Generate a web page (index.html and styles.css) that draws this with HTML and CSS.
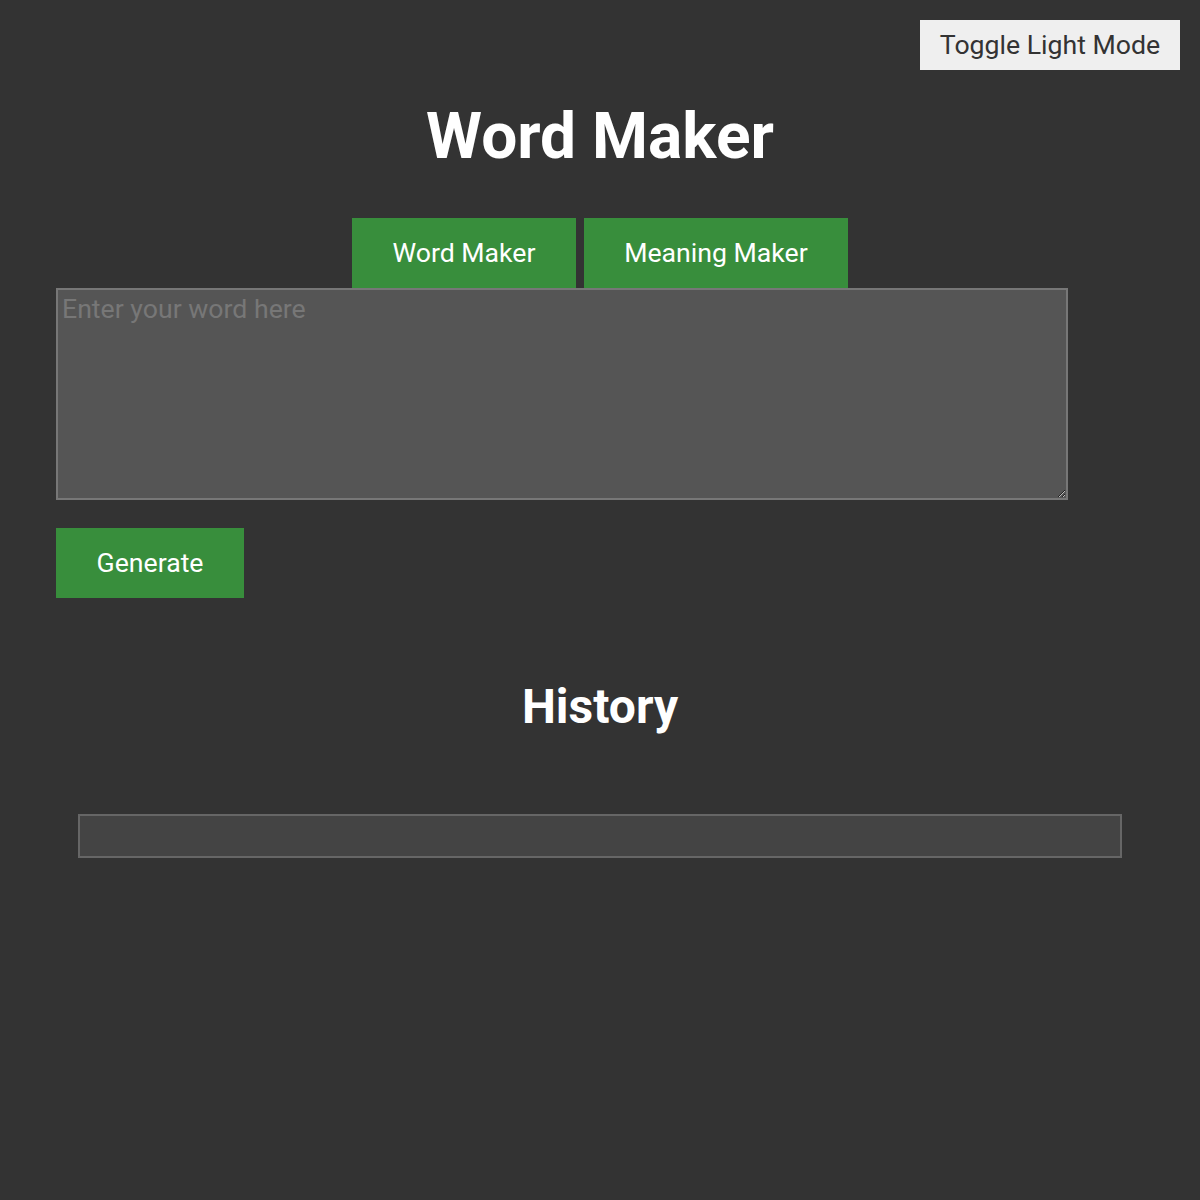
FILE: index.html
```html
<!DOCTYPE html>
<html lang="en">
<head>
<meta charset="utf-8">
<title>Word Maker</title>
<link rel="stylesheet" href="styles.css">
</head>
<body>
<button class="toggle">Toggle Light Mode</button>
<main class="page">
  <h1 class="title">Word Maker</h1>
  <div class="tabs">
    <button class="tab tab-word">Word Maker</button>
    <button class="tab tab-meaning">Meaning Maker</button>
  </div>
  <div class="form">
    <textarea class="input" placeholder="Enter your word here"></textarea>
    <button class="generate">Generate</button>
  </div>
  <h2 class="history-title">History</h2>
  <div class="history"></div>
</main>
</body>
</html>
```

FILE: styles.css
```css
html, body {
  margin: 0;
  padding: 0;
  background: #333333;
  font-family: Roboto, "Liberation Sans", sans-serif;
  color: #ffffff;
}

.toggle {
  position: absolute;
  top: 20px;
  right: 20px;
  width: 260px;
  height: 50px;
  border: none;
  background: #efefef;
  color: #333333;
  font-family: Roboto, "Liberation Sans", sans-serif;
  font-size: 26.67px;
  padding: 0;
  cursor: pointer;
}

.page {
  display: flex;
  flex-direction: column;
  padding-top: 99px;
}

.title {
  margin: 0;
  text-align: center;
  font-size: 64px;
  font-weight: 700;
  line-height: 75px;
}

.tabs {
  display: flex;
  justify-content: center;
  gap: 8px;
  margin-top: 44px;
}

.tab {
  height: 70px;
  border: none;
  background: #388e3c;
  color: #ffffff;
  font-family: Roboto, "Liberation Sans", sans-serif;
  font-size: 26.67px;
  padding: 0;
}

.tab-word { width: 224px; }
.tab-meaning { width: 264px; }

.form {
  display: flex;
  flex-direction: column;
  align-items: flex-start;
  padding-left: 56px;
}

.input {
  box-sizing: border-box;
  width: 1012px;
  height: 212px;
  margin: 0;
  border: 2px solid #777777;
  background: #555555;
  color: #ffffff;
  font-family: Roboto, "Liberation Sans", sans-serif;
  font-size: 26.67px;
  padding: 3px 4px;
  display: block;
  color-scheme: dark;
}

.input::placeholder {
  color: #777777;
}

.generate {
  margin-top: 28px;
  width: 188px;
  height: 70px;
  border: none;
  background: #388e3c;
  color: #ffffff;
  font-family: Roboto, "Liberation Sans", sans-serif;
  font-size: 26.67px;
  padding: 0;
}

.history-title {
  margin: 81px 0 0;
  text-align: center;
  font-size: 48px;
  font-weight: 700;
  line-height: 56px;
}

.history {
  box-sizing: border-box;
  align-self: center;
  width: 1044px;
  height: 44px;
  margin-top: 79px;
  background: #444444;
  border: 2px solid #666666;
}
```
